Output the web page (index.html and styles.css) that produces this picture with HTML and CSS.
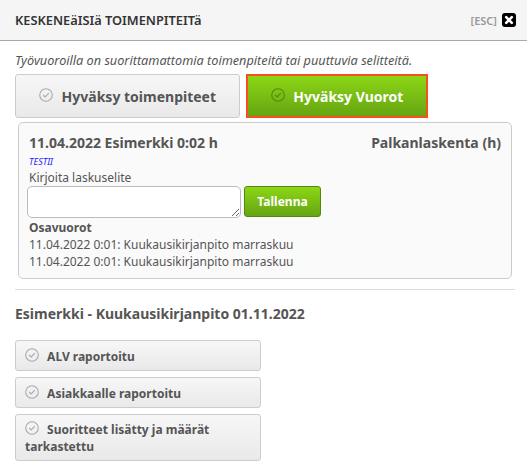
FILE: index.html
```html
<!DOCTYPE html>
<html lang="fi">
<head>
    <meta charset="UTF-8">
    <meta name="viewport" content="width=device-width, initial-scale=1.0">
    <title>Keskeneräisiä toimenpiteitä</title>
    <link rel="stylesheet" href="styles.css">
</head>
<body>
    <div class="dialog">
        <div class="dialog-header">
            <span class="dialog-title">KESKENEäISIä TOIMENPITEITä</span>
            <span class="esc">[ESC]</span>
            <span class="close-icon">
                <svg width="14" height="14" viewBox="0 0 14 14">
                    <rect width="14" height="14" rx="3" fill="#000"/>
                    <path d="M4.2 4.2l5.6 5.6M9.8 4.2l-5.6 5.6" stroke="#fff" stroke-width="2.6" stroke-linecap="round"/>
                </svg>
            </span>
        </div>

        <div class="dialog-body">
            <p class="notice">Työvuoroilla on suorittamattomia toimenpiteitä tai puuttuvia selitteitä.</p>

            <div class="main-actions">
                <button class="btn btn-large btn-gray">
                    <svg class="check" width="14" height="14" viewBox="0 0 14 14"><circle cx="7" cy="7" r="6.3" fill="none" stroke="#aaa" stroke-width="1.1"/><path d="M4.2 7l2 2 3.6-3.8" fill="none" stroke="#aaa" stroke-width="1.1"/></svg>
                    Hyväksy toimenpiteet
                </button>
                <button class="btn btn-large btn-green btn-focus">
                    <svg class="check" width="14" height="14" viewBox="0 0 14 14"><circle cx="7" cy="7" r="6.3" fill="none" stroke="#4f8a10" stroke-width="1.1"/><path d="M4.2 7l2 2 3.6-3.8" fill="none" stroke="#4f8a10" stroke-width="1.1"/></svg>
                    Hyväksy Vuorot
                </button>
            </div>

            <div class="shift-card">
                <div class="shift-head">
                    <span>11.04.2022 Esimerkki 0:02 h</span>
                    <span>Palkanlaskenta (h)</span>
                </div>
                <div class="shift-tag">TESTII</div>
                <label class="shift-label" for="selite">Kirjoita laskuselite</label>
                <div class="note-row">
                    <textarea id="selite" class="note-input"></textarea>
                    <button class="btn btn-green btn-save">Tallenna</button>
                </div>
                <div class="sub-title">Osavuorot</div>
                <div class="sub-row">11.04.2022 0:01: Kuukausikirjanpito marraskuu</div>
                <div class="sub-row">11.04.2022 0:01: Kuukausikirjanpito marraskuu</div>
            </div>

            <hr class="divider">

            <h3 class="section-title">Esimerkki - Kuukausikirjanpito 01.11.2022</h3>

            <div class="check-list">
                <button class="btn btn-gray btn-check">
                    <svg class="check" width="14" height="14" viewBox="0 0 14 14"><circle cx="7" cy="7" r="6.3" fill="none" stroke="#aaa" stroke-width="1.1"/><path d="M4.2 7l2 2 3.6-3.8" fill="none" stroke="#aaa" stroke-width="1.1"/></svg>
                    ALV raportoitu
                </button>
                <button class="btn btn-gray btn-check">
                    <svg class="check" width="14" height="14" viewBox="0 0 14 14"><circle cx="7" cy="7" r="6.3" fill="none" stroke="#aaa" stroke-width="1.1"/><path d="M4.2 7l2 2 3.6-3.8" fill="none" stroke="#aaa" stroke-width="1.1"/></svg>
                    Asiakkaalle raportoitu
                </button>
                <button class="btn btn-gray btn-check">
                    <svg class="check" width="14" height="14" viewBox="0 0 14 14"><circle cx="7" cy="7" r="6.3" fill="none" stroke="#aaa" stroke-width="1.1"/><path d="M4.2 7l2 2 3.6-3.8" fill="none" stroke="#aaa" stroke-width="1.1"/></svg>
                    Suoritteet lisätty ja määrät tarkastettu
                </button>
            </div>
        </div>
    </div>
</body>
</html>
```

FILE: styles.css
```css
html, body {
    margin: 0;
    padding: 0;
    background-color: #fff;
}
body {
    font-family: "Noto Sans", "Open Sans", sans-serif;
    font-size: 12px;
    line-height: 17px;
    color: #555;
    overflow: hidden;
}
.dialog {
    width: 527px;
    height: 473px;
    overflow: hidden;
}
.dialog-header {
    display: flex;
    align-items: center;
    height: 40px;
    padding: 0 11px 0 15px;
    background-color: #f5f5f5;
    border-bottom: 1px solid #aaa;
}
.dialog-title {
    flex-grow: 1;
    font-size: 12.8px;
    font-weight: 600;
    color: #333;
}
.esc {
    font-size: 11px;
    font-weight: 600;
    color: #999;
    margin-right: 5px;
}
.close-icon {
    display: flex;
}
.dialog-body {
    padding: 11px 12px 0 15px;
}
.notice {
    margin: 0 0 5px;
    font-size: 12.7px;
    font-style: italic;
    color: #555;
}
.main-actions {
    display: flex;
    gap: 6px;
    margin-bottom: 4px;
}
.btn {
    font-family: inherit;
    font-weight: 700;
    border-radius: 3px;
    cursor: pointer;
}
.btn-gray {
    color: #555;
    border: 1px solid #ccc;
    background: linear-gradient(#f7f7f7, #e9e9e9);
}
.btn-green {
    color: #fff;
    border: 1px solid #4f8a10;
    background: linear-gradient(#8cd616, #66a512);
}
.btn-large {
    height: 44px;
    font-size: 14px;
    padding: 0;
}
.btn-large.btn-gray {
    width: 225px;
}
.btn-focus {
    width: 182px;
    border: 2px solid #f4511e;
    border-radius: 0;
}
.check {
    vertical-align: -1px;
    margin-right: 5px;
}
.btn-large .check {
    vertical-align: 0;
}
.shift-card {
    margin-left: 3px;
    width: 472px;
    padding: 8px 10px 8px 10px;
    background-color: #fafafa;
    border: 1px solid #ccc;
    border-radius: 5px;
}
.shift-head {
    display: flex;
    justify-content: space-between;
    font-size: 14px;
    font-weight: 700;
    line-height: 24px;
}
.shift-tag {
    font-size: 9px;
    line-height: 13px;
    font-style: italic;
    color: #1a1aff;
}
.shift-label {
    display: block;
    margin-top: 1px;
}
.note-row {
    display: flex;
    align-items: flex-start;
    gap: 3px;
    margin: 0 0 1px -2px;
}
.note-input {
    box-sizing: border-box;
    width: 214px;
    height: 32px;
    margin: 0;
    background-color: #fff;
    border: 1px solid #bbb;
    border-radius: 5px;
}
.btn-save {
    width: 77px;
    height: 31px;
    font-size: 12px;
    padding: 0;
}
.sub-title {
    font-weight: 700;
}
.divider {
    border: none;
    border-top: 1px solid #ddd;
    margin: 10px 0 0;
}
.section-title {
    margin: 14px 0 16px;
    font-size: 14px;
    line-height: 20px;
    font-weight: 700;
}
.check-list {
    display: flex;
    flex-direction: column;
    gap: 6px;
    width: 246px;
}
.btn-check {
    text-align: left;
    font-size: 12px;
    padding: 6px 12px 5px 9px;
    min-height: 31px;
}
```
